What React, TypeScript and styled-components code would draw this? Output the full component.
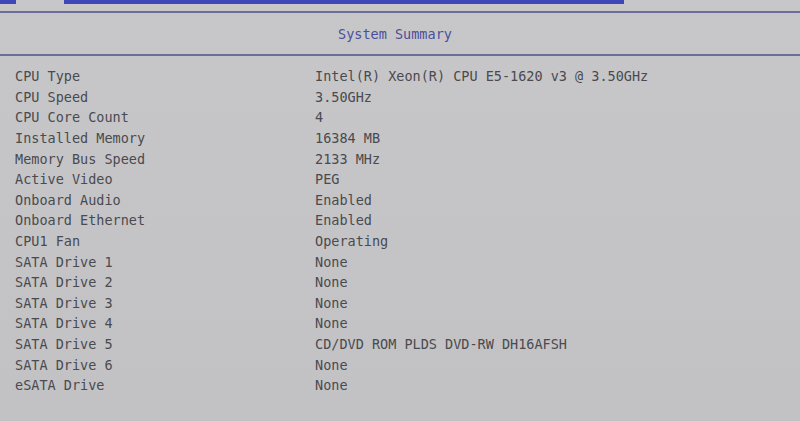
import React from 'react'
import styled, { createGlobalStyle } from 'styled-components'

const Global = createGlobalStyle`
  html, body { margin: 0; padding: 0; background: #c5c5c7; }
`

const Screen = styled.div`
  width: 800px;
  height: 421px;
  overflow: hidden;
  background: linear-gradient(180deg, #c7c7c9 0%, #c4c4c6 60%, #c2c2c5 100%);
  font-family: "DejaVu Sans Mono", "Liberation Mono", monospace;
  font-size: 13.5px;
  color: #4a4a4f;
`

const TopStrip = styled.div`
  display: flex;
  height: 4px;
`
const StripPart = styled.div<{ $w?: number; $on?: boolean }>`
  width: ${p => (p.$w ? p.$w + 'px' : 'auto')};
  flex-grow: ${p => (p.$w ? 0 : 1)};
  background: ${p => (p.$on ? '#3d47b8' : 'transparent')};
`

const Rule = styled.div<{ $top: number }>`
  margin-top: ${p => p.$top}px;
  height: 2px;
  background: #6c6e98;
`

const Header = styled.div`
  height: 41px;
  display: flex;
  align-items: center;
  justify-content: center;
  color: #4a4e9c;
  padding-right: 10px;
`

const List = styled.div`
  display: grid;
  grid-template-columns: 300px 1fr;
  grid-auto-rows: 20.6px;
  align-items: center;
  padding: 10px 0 0 15px;
`
const Cell = styled.div`
  white-space: pre;
`

const rows: [string, string][] = [
  ['CPU Type', 'Intel(R) Xeon(R) CPU E5-1620 v3 @ 3.50GHz'],
  ['CPU Speed', '3.50GHz'],
  ['CPU Core Count', '4'],
  ['Installed Memory', '16384 MB'],
  ['Memory Bus Speed', '2133 MHz'],
  ['Active Video', 'PEG'],
  ['Onboard Audio', 'Enabled'],
  ['Onboard Ethernet', 'Enabled'],
  ['CPU1 Fan', 'Operating'],
  ['SATA Drive 1', 'None'],
  ['SATA Drive 2', 'None'],
  ['SATA Drive 3', 'None'],
  ['SATA Drive 4', 'None'],
  ['SATA Drive 5', 'CD/DVD ROM PLDS DVD-RW DH16AFSH'],
  ['SATA Drive 6', 'None'],
  ['eSATA Drive', 'None'],
]

export default function App() {
  return (
    <Screen>
      <Global />
      <TopStrip>
        <StripPart $w={16} $on />
        <StripPart $w={48} />
        <StripPart $w={560} $on />
        <StripPart />
      </TopStrip>
      <Rule $top={7} />
      <Header>System Summary</Header>
      <Rule $top={0} />
      <List>
        {rows.map(([k, v]) => (
          <React.Fragment key={k}>
            <Cell>{k}</Cell>
            <Cell>{v}</Cell>
          </React.Fragment>
        ))}
      </List>
    </Screen>
  )
}
